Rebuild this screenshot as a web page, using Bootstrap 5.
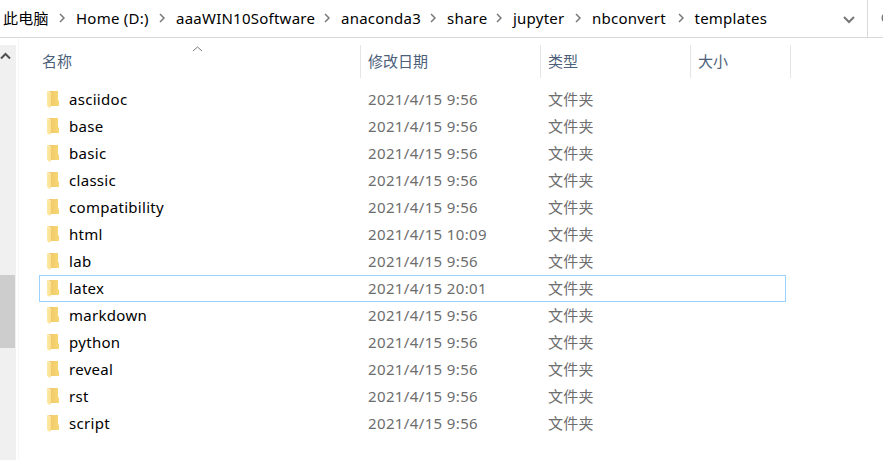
<!DOCTYPE html>
<html lang="zh-CN">
<head>
<meta charset="utf-8">
<meta name="viewport" content="width=device-width, initial-scale=1">
<title>templates</title>
<link href="https://cdn.jsdelivr.net/npm/bootstrap@5.3.0/dist/css/bootstrap.min.css" rel="stylesheet">
<style>
body{width:883px;height:460px;font-family:"Noto Sans","Noto Sans CJK SC",sans-serif;font-size:15px;line-height:27px;color:#000}
svg{display:block;flex:none}
.address{height:38px;border-bottom:1px solid #d9d9d9;padding-left:3px}
.crumbs{width:865px;border-right:1px solid #d9d9d9;letter-spacing:.24px}
.crumb{flex:none;height:36px;padding-right:11px;white-space:nowrap}
.crumb:nth-child(1){width:73px}
.crumb:nth-child(2){width:100px}
.crumb:nth-child(3){width:165px}
.crumb:nth-child(4){width:106px}
.crumb:nth-child(5){width:66px}
.crumb:nth-child(6){width:79px}
.crumb:nth-child(7){width:102.500px}
.crumb:nth-child(8){width:160px;padding-right:0}
.scrollbar{width:16px;margin-top:7px;background:#f0f0f0}
.scroll-thumb{width:15px;height:73px;margin-top:211px;background:#cdcdcd}
.listing{margin-left:2px;border-left:1px solid #f7f7f7;padding:7px 0 0 20px}
.heads{height:33px;color:#4c607a;line-height:33px}
.head-cell{height:33px;border-right:1px solid #e5e5e5}
.sort-mark{left:153px;top:1px}
.c-name{width:322px;padding-left:3px}
.c-date{width:180px;padding-left:7px}
.c-type{width:150px;padding-left:7px}
.c-size{width:100px;padding-left:7px}
.files{margin-top:8px}
.file-row{width:747px;height:27px;border:1px solid transparent;color:#6d6d6d;line-height:25px;white-space:nowrap}
.file-row.is-current{border:1px solid #99d1ff}
.f-name{width:321px;padding-left:7px;color:#000;letter-spacing:.3px}
.f-name svg{margin:-1px 10px 0 0}
.f-date{width:180px;padding-left:7px;letter-spacing:.37px}
.f-type{padding-left:7px;letter-spacing:.2px}
</style>
<script src="https://cdn.jsdelivr.net/npm/bootstrap@5.3.0/dist/js/bootstrap.bundle.min.js"></script>
</head>
<body class="bg-white overflow-hidden d-flex flex-column">
<svg width="0" height="0" class="position-absolute">
<defs><linearGradient id="back" x2="1"><stop stop-color="#eec667"/><stop offset="1" stop-color="#f8d775"/></linearGradient>
<linearGradient id="front" x2="1"><stop stop-color="#ffe9a6"/><stop offset="1" stop-color="#fbdf8c"/></linearGradient></defs>
<symbol id="sep" viewBox="0 0 6 10"><path d="M1 1l4 4-4 4" fill="none" stroke="#777" stroke-width="1.5"/></symbol>
<symbol id="folder" viewBox="0 0 12 17"><path d="M1 0h10v9l1 1v5H4V2z" fill="url(#back)"/><path d="M0 0l4 2.5V15l-1 2-3-2z" fill="url(#front)"/></symbol>
</svg>
<header class="address d-flex flex-shrink-0">
<nav class="crumbs d-flex flex-shrink-0" aria-label="path">
<div class="crumb d-flex align-items-center justify-content-between"><span>此电脑</span><svg width="6" height="10"><use href="#sep"/></svg></div>
<div class="crumb d-flex align-items-center justify-content-between"><span>Home (D:)</span><svg width="6" height="10"><use href="#sep"/></svg></div>
<div class="crumb d-flex align-items-center justify-content-between"><span>aaaWIN10Software</span><svg width="6" height="10"><use href="#sep"/></svg></div>
<div class="crumb d-flex align-items-center justify-content-between"><span>anaconda3</span><svg width="6" height="10"><use href="#sep"/></svg></div>
<div class="crumb d-flex align-items-center justify-content-between"><span>share</span><svg width="6" height="10"><use href="#sep"/></svg></div>
<div class="crumb d-flex align-items-center justify-content-between"><span>jupyter</span><svg width="6" height="10"><use href="#sep"/></svg></div>
<div class="crumb d-flex align-items-center justify-content-between"><span>nbconvert</span><svg width="6" height="10"><use href="#sep"/></svg></div>
<div class="crumb d-flex align-items-center justify-content-between"><span>templates</span><svg class="mt-1" width="12" height="8"><path d="M1 1l5 5 5-5" fill="none" stroke="#777" stroke-width="2"/></svg></div>
</nav>
<div class="flex-grow-1 overflow-hidden"><svg class="mt-2 ms-auto" width="2" height="20"><circle cx="6.5" cy="10" r="5" fill="none" stroke="#777" stroke-width="2"/></svg></div>
</header>
<main class="d-flex flex-grow-1">
<div class="scrollbar"><svg width="12" height="19"><path d="M1 13.5l4.5-4.5 4.500 4.500" fill="none" stroke="#505050" stroke-width="2"/></svg><div class="scroll-thumb"></div></div>
<section class="listing flex-grow-1">
<div class="heads d-flex position-relative">
<svg class="sort-mark position-absolute" width="11" height="6"><path d="M1 5l4.500-4 4.500 4" fill="none" stroke="#777"/></svg>
<div class="head-cell c-name">名称</div><div class="head-cell c-date">修改日期</div><div class="head-cell c-type">类型</div><div class="head-cell c-size">大小</div>
</div>
<div class="files" id="files"></div>
</section>
</main>
<script>
const files=[['asciidoc','9:56'],['base','9:56'],['basic','9:56'],['classic','9:56'],['compatibility','9:56'],['html','10:09'],['lab','9:56'],['latex','20:01'],['markdown','9:56'],['python','9:56'],['reveal','9:56'],['rst','9:56'],['script','9:56']];
document.getElementById('files').innerHTML=files.map(([name,time])=>`<div class="file-row d-flex${name==='latex'?' is-current':''}"><div class="f-name d-flex align-items-center"><svg width="12" height="17"><use href="#folder"/></svg><span>${name}</span></div><div class="f-date"><span>2021/4/15 ${time}</span></div><div class="f-type">文件夹</div></div>`).join('');
</script>
</body>
</html>
